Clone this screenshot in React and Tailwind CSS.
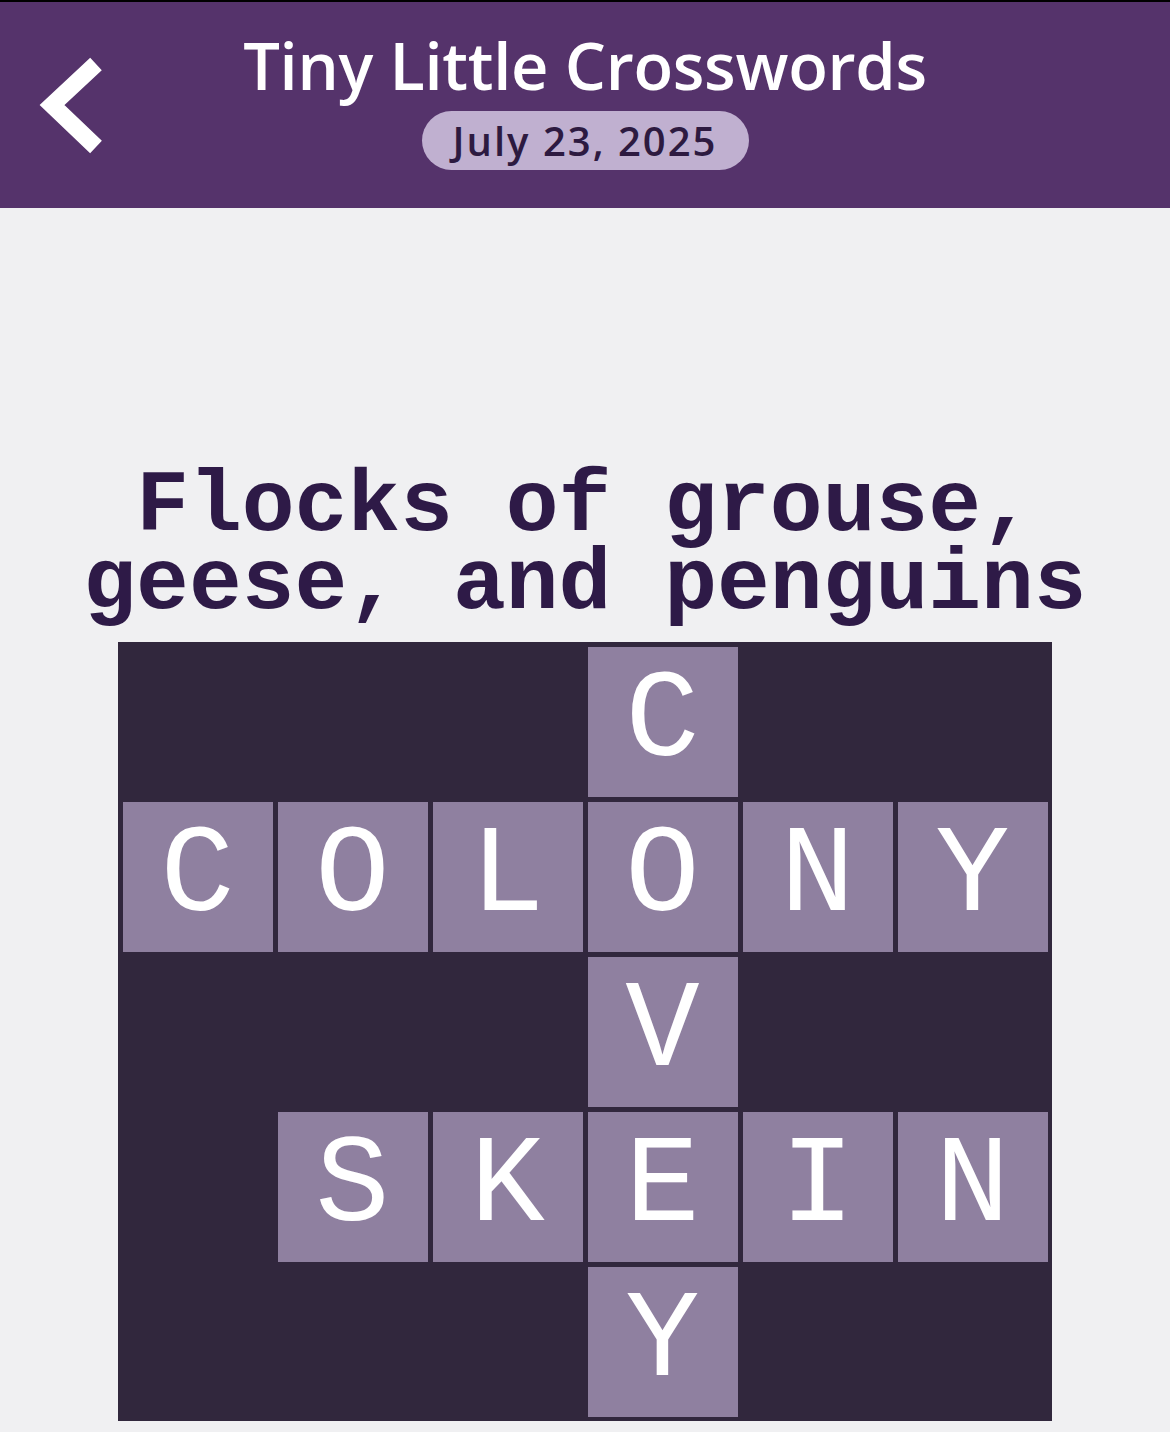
import React from 'react'

// 6 x 5 board, null = blocked square
const board = [
  [null, null, null, 'C', null, null],
  ['C', 'O', 'L', 'O', 'N', 'Y'],
  [null, null, null, 'V', null, null],
  [null, 'S', 'K', 'E', 'I', 'N'],
  [null, null, null, 'Y', null, null],
]

function BackChevron() {
  return (
    <svg width="70" height="104" viewBox="0 0 70 104" className="block">
      <polyline points="60,10 16,51 60,93" fill="none" stroke="white" strokeWidth="17" strokeLinejoin="miter" />
    </svg>
  )
}

export default function App() {
  return (
    <div className="w-[1170px] h-[1432px] bg-[#f0f0f2] flex flex-col overflow-hidden">
      <header className="h-[208px] border-t-2 border-black bg-[#55336b] relative flex flex-col items-center">
        <button className="absolute left-[36px] top-[52px]">
          <BackChevron />
        </button>
        <h1 className="mt-[22px] text-white text-[65px] leading-[82px] font-semibold font-['Open_Sans',sans-serif] tracking-[-0.3px]">
          Tiny Little Crosswords
        </h1>
        <div className="mt-[5px] h-[59px] w-[327px] rounded-full bg-[#c0b0d0] flex items-center justify-center text-[#2d1a40] text-[40px] font-semibold font-['Open_Sans',sans-serif] tracking-[2px]">
          July 23, 2025
        </div>
      </header>

      <main className="flex flex-col items-center">
        <p className="mt-[260px] text-center text-[#2e1a47] text-[88px] leading-[78px] font-bold font-['Liberation_Mono',monospace] whitespace-pre">
          {'Flocks of grouse,\ngeese, and penguins'}
        </p>
        <div className="mt-[18px] bg-[#31273d] p-[4.5px] grid grid-cols-[repeat(6,150px)] auto-rows-[150px] gap-[5px]">
          {board.flat().map((ch, i) =>
            ch ? (
              <div key={i} className="bg-[#8f80a0] flex items-center justify-center text-white text-[124px] leading-none font-['Liberation_Mono',monospace]">
                {ch}
              </div>
            ) : (
              <div key={i} />
            )
          )}
        </div>
      </main>
    </div>
  )
}
